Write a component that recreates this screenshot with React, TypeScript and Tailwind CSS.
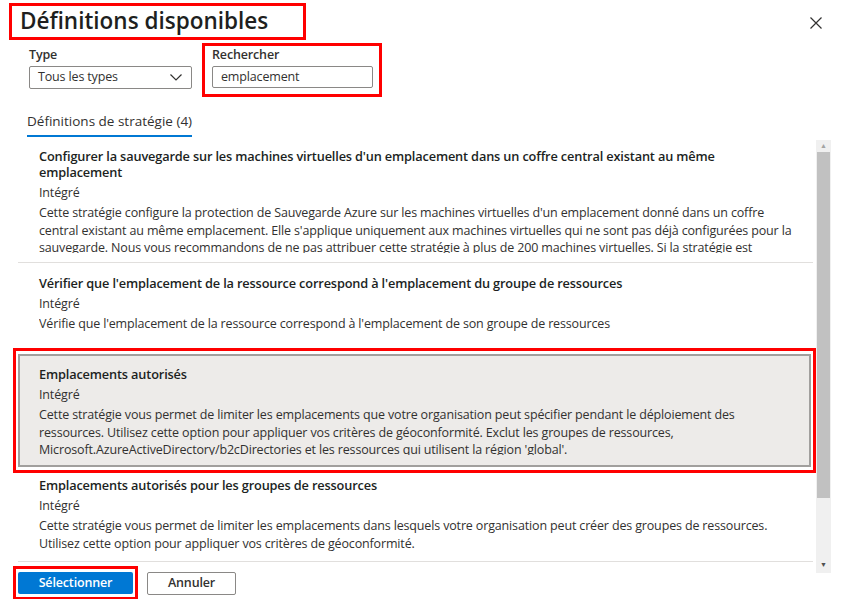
type Item = {
  title: string[];
  desc: string[];
  pt: string;
  h: string;
  selected?: boolean;
  line?: boolean;
};

const items: Item[] = [
  {
    title: [
      "Configurer la sauvegarde sur les machines virtuelles d'un emplacement dans un coffre central existant au même",
      "emplacement",
    ],
    desc: [
      "Cette stratégie configure la protection de Sauvegarde Azure sur les machines virtuelles d'un emplacement donné dans un coffre",
      "central existant au même emplacement. Elle s'applique uniquement aux machines virtuelles qui ne sont pas déjà configurées pour la",
      "sauvegarde. Nous vous recommandons de ne pas attribuer cette stratégie à plus de 200 machines virtuelles. Si la stratégie est",
    ],
    pt: "pt-[8px]",
    h: "h-[123px]",
    line: true,
  },
  {
    title: [
      "Vérifier que l'emplacement de la ressource correspond à l'emplacement du groupe de ressources",
    ],
    desc: [
      "Vérifie que l'emplacement de la ressource correspond à l'emplacement de son groupe de ressources",
    ],
    pt: "pt-[12px]",
    h: "h-[91px]",
  },
  {
    title: ["Emplacements autorisés"],
    desc: [
      "Cette stratégie vous permet de limiter les emplacements que votre organisation peut spécifier pendant le déploiement des",
      "ressources. Utilisez cette option pour appliquer vos critères de géoconformité. Exclut les groupes de ressources,",
      "Microsoft.AzureActiveDirectory/b2cDirectories et les ressources qui utilisent la région 'global'.",
    ],
    pt: "pt-[10px]",
    h: "h-[113px]",
    selected: true,
  },
  {
    title: ["Emplacements autorisés pour les groupes de ressources"],
    desc: [
      "Cette stratégie vous permet de limiter les emplacements dans lesquels votre organisation peut créer des groupes de ressources.",
      "Utilisez cette option pour appliquer vos critères de géoconformité.",
    ],
    pt: "pt-[10px]",
    h: "h-[95px]",
    line: true,
  },
];

const PolicyRow = ({ item }: { item: Item }) => {
  const body = (
    <div
      className={`${item.h} ${item.pt} overflow-hidden ${
        item.selected
          ? "border-2 border-[#a19f9d] bg-[#edebe9] pl-[19px]"
          : "pl-[21px]"
      } ${item.line ? "border-b border-[#e1dfdd]" : ""}`}>
      <div className="text-[12.75px] font-semibold leading-[16px] text-[#201f1e]">
        {item.title.map((t) => (
          <div key={t} className="whitespace-nowrap">
            {t}
          </div>
        ))}
      </div>
      <div className="mt-[4px] leading-[17px]">Intégré</div>
      <div className="mt-[3px] max-h-[49px] overflow-hidden leading-[17.5px]">
        {item.desc.map((t) => (
          <div key={t} className="whitespace-nowrap">
            {t}
          </div>
        ))}
      </div>
    </div>
  );

  if (!item.selected) return body;

  // red highlight around the selected row
  return (
    <div className="-ml-[5px] -mr-[3px] -my-[6px] border-[3px] border-[#ff0000] px-[2px] py-[3px]">
      {body}
    </div>
  );
};

export default function App() {
  return (
    <div
      className="w-[851px] h-[599px] overflow-hidden bg-white text-[12.5px] tracking-[-0.15px] text-[#323130]"
      style={{ fontFamily: "'Open Sans', 'Noto Sans', sans-serif" }}>
      {/* ===== HEADER ===== */}
      <div className="flex h-[43px] items-start justify-between">
        <div className="ml-[9px] mt-[3px] flex h-[37px] w-[297px] items-center border-[3px] border-[#ff0000] pl-[8px]">
          <h1 className="text-[22.5px] font-semibold leading-none tracking-normal text-[#201f1e]">
            Définitions disponibles
          </h1>
        </div>
        <button className="mr-[29px] mt-[17px] text-[#323130]">
          <svg width="12" height="12" viewBox="0 0 12 12" fill="none">
            <path
              d="M0.5 0.5L11.5 11.5M11.5 0.5L0.5 11.5"
              stroke="currentColor"
              strokeWidth="1.2"
            />
          </svg>
        </button>
      </div>

      {/* ===== FILTERS ===== */}
      <div className="flex h-[54px] items-start">
        <div className="ml-[29px] w-[163px] pt-[3px]">
          <div className="font-semibold leading-[17px]">Type</div>
          <div className="mt-[3px] flex h-[23px] items-center justify-between rounded-[2px] border border-[#8a8886] pl-[8px] pr-[9px]">
            <span>Tous les types</span>
            <svg width="12" height="7" viewBox="0 0 12 7" fill="none">
              <path
                d="M0.5 0.5L6 6L11.5 0.5"
                stroke="#323130"
                strokeWidth="1.2"
              />
            </svg>
          </div>
        </div>
        <div className="ml-[10px] h-[54px] w-[180px] border-[3px] border-[#ff0000] pl-[7px]">
          <div className="font-semibold leading-[17px]">Rechercher</div>
          <div className="mt-[3px] flex h-[22px] w-[161px] items-center rounded-[2px] border border-[#8a8886] pl-[8px]">
            emplacement
          </div>
        </div>
      </div>

      {/* ===== TAB ===== */}
      <div className="flex">
        <div className="ml-[27px] mt-[16px] border-b-2 border-[#0078d4] pb-[5px] text-[13.5px] leading-[17px] tracking-normal">
          Définitions de stratégie (4)
        </div>
      </div>

      {/* ===== LIST ===== */}
      <div className="mt-[3px] flex h-[433px]">
        <div className="ml-[13px] w-[803px] overflow-hidden pl-[5px] pr-[3px]">
          {items.map((item) => (
            <PolicyRow key={item.title[0]} item={item} />
          ))}
        </div>
        <div className="flex w-[15px] flex-col items-center bg-[#f0f0f0]">
          <div className="flex h-[12px] items-center text-[7px] text-[#a3a3a3]">
            ▲
          </div>
          <div className="h-[346px] w-[13px] bg-[#c1c1c1]" />
          <div className="flex-1" />
          <div className="flex h-[16px] items-center text-[7px] text-[#505050]">
            ▼
          </div>
        </div>
      </div>

      {/* ===== FOOTER ===== */}
      <div className="-mt-[7px] flex items-start">
        <div className="ml-[13px] border-[3px] border-[#ff0000] px-[2px] py-[3px]">
          <button className="h-[22px] w-[115px] rounded-[2px] bg-[#0078d4] font-semibold leading-none text-white">
            Sélectionner
          </button>
        </div>
        <button className="ml-[9px] mt-[6px] h-[23px] w-[89px] rounded-[2px] border border-[#8a8886] font-semibold leading-none text-[#323130]">
          Annuler
        </button>
      </div>
    </div>
  );
}
